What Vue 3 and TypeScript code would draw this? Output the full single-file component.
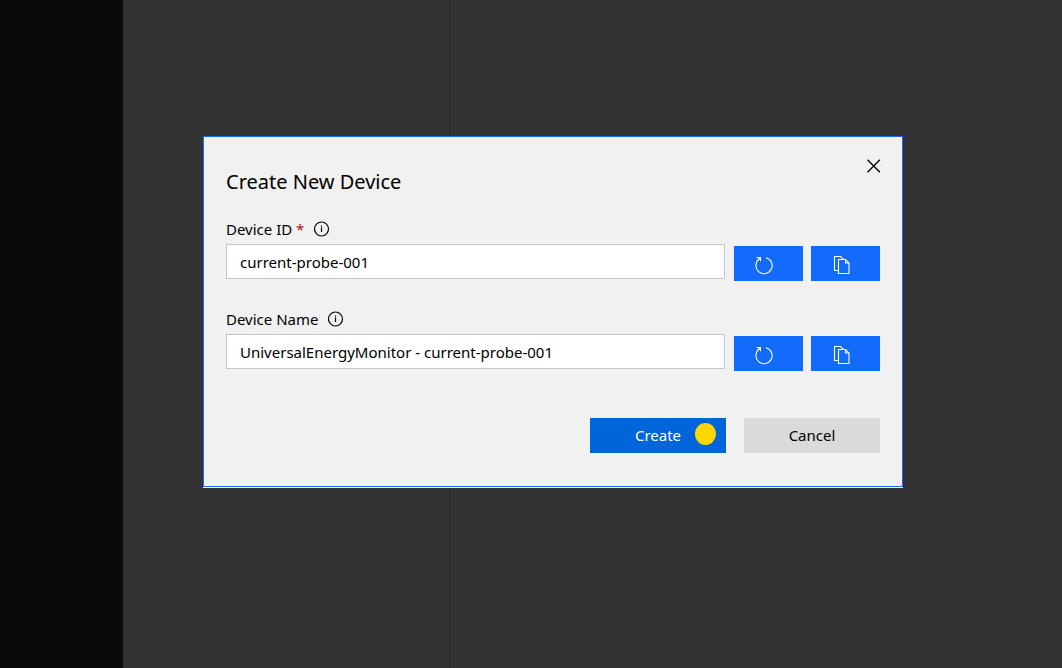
<script setup lang="ts">
import { ref } from 'vue'

interface Field {
  id: string
  label: string
  required: boolean
}

const fields: Field[] = [
  { id: 'device-id', label: 'Device ID', required: true },
  { id: 'device-name', label: 'Device Name', required: false },
]
const initial: Record<string, string> = {
  'device-id': 'current-probe-001',
  'device-name': 'UniversalEnergyMonitor - current-probe-001',
}
const values = ref<Record<string, string>>({ ...initial })
const open = ref(true)

function reset(id: string) {
  values.value[id] = initial[id]
}
function copy(id: string) {
  navigator.clipboard?.writeText(values.value[id])
}
</script>

<template>
  <div class="page">
    <div class="nav"></div>
    <div class="list"></div>
    <div class="content"></div>
    <div v-if="open" class="overlay">
      <form class="dialog" role="dialog" aria-labelledby="dialog-title" @submit.prevent="open = false">
        <header class="head">
          <h1 id="dialog-title">Create New Device</h1>
          <button type="button" class="close" aria-label="Close" @click="open = false">
            <svg width="14" height="14" viewBox="0 0 14 14"><path d="M.5 .8l12.4 12.4M12.9 .8l-12.4 12.4" /></svg>
          </button>
        </header>

        <div v-for="f in fields" :key="f.id" class="field">
          <div class="label-row">
            <label :for="f.id">{{ f.label }}<span v-if="f.required" class="star"> *</span></label>
            <svg class="info" width="16" height="16" viewBox="0 0 16 16">
              <circle cx="7.5" cy="8" r="7" />
              <path d="M7.5 6.5v4.5M7.5 4.5v1.2" />
            </svg>
          </div>
          <div class="input-row">
            <input :id="f.id" v-model="values[f.id]" type="text" :required="f.required" />
            <button type="button" class="tool" aria-label="Reset" @click="reset(f.id)">
              <svg width="20" height="20" viewBox="0 0 20 20">
                <path d="M11.9 2.7A8.1 8.1 0 1 1 5.6 3.8M2.5 2.5H6.5V6.2M6.5 2.5L3.6 5.2" />
              </svg>
            </button>
            <button type="button" class="tool" aria-label="Copy" @click="copy(f.id)">
              <svg width="20" height="20" viewBox="0 0 20 20">
                <path d="M7.5 15.5h-4v-14h6l3 3M7.5 4.5h7l3.5 3.5v10.5h-10.5zM14.5 4.5v3.5h3.5" />
              </svg>
            </button>
          </div>
        </div>

        <footer class="actions">
          <button type="submit" class="action primary">Create<span class="marker"></span></button>
          <button type="button" class="action" @click="open = false">Cancel</button>
        </footer>
      </form>
    </div>
  </div>
</template>

<style>
body {
  margin: 0;
}
</style>

<style scoped>
.page {
  position: relative;
  display: flex;
  min-height: 100vh;
  background: #323232;
  font-family: "Noto Sans", sans-serif;
  font-size: 15px;
  line-height: 20px;
  color: #000;
}
.nav {
  width: 123px;
  background: #090a0c;
}
.list {
  width: 326px;
  border-right: 1px solid #292929;
}
.content {
  flex: 1;
}
.overlay {
  position: absolute;
  inset: 0;
  display: flex;
  align-items: center;
  justify-content: center;
  padding: 0 0 45px 44px;
}
.dialog {
  box-sizing: border-box;
  width: 700px;
  max-width: 100%;
  padding: 21px 22px 33px;
  background: #f1f1f1;
  border: 1px solid #136bfb;
  box-shadow: 0 1px 0 #fff;
}
.head {
  display: flex;
  justify-content: space-between;
  align-items: flex-start;
  margin-bottom: 23px;
}
h1 {
  margin: 10px 0 0;
  font-size: 20px;
  line-height: 28px;
  font-weight: 400;
}
button {
  padding: 0;
  border: 0;
  font: inherit;
  color: inherit;
  cursor: pointer;
}
svg {
  display: block;
  fill: none;
  stroke: currentColor;
}
.close {
  margin-right: -1px;
  padding: 1px 0 1px 1px;
  background: none;
}
.close svg {
  stroke-width: 1.3;
}
.info {
  stroke-width: 1.2;
}
.label-row {
  display: flex;
  align-items: center;
  gap: 10px;
  margin-bottom: 5px;
}
.star {
  color: #b01010;
}
.input-row {
  display: flex;
  gap: 8px;
}
input {
  box-sizing: border-box;
  flex: 1;
  min-width: 0;
  height: 35px;
  margin-right: 1px;
  padding: 0 13px;
  border: 1px solid #c6c6c6;
  border-radius: 0;
  background: #fff;
  font: inherit;
  color: inherit;
  outline: none;
}
.tool {
  display: flex;
  align-items: center;
  width: 69px;
  height: 35px;
  margin-top: 2px;
  padding: 3px 0 0 20px;
  background: #136bfb;
  color: #fff;
}
.tool svg {
  stroke-width: 1.1;
}
.field {
  margin-bottom: 28px;
}
.field + .actions {
  margin-top: 47px;
}
.actions {
  display: flex;
  justify-content: flex-end;
  gap: 18px;
}
.action {
  position: relative;
  width: 136px;
  height: 35px;
  padding-bottom: 2px;
  background: #dadada;
}
.primary {
  background: #0065d9;
  color: #fff;
}
.marker {
  position: absolute;
  top: 5px;
  right: 10px;
  width: 21px;
  height: 22px;
  border-radius: 50%;
  background: #ffd600;
}
</style>
